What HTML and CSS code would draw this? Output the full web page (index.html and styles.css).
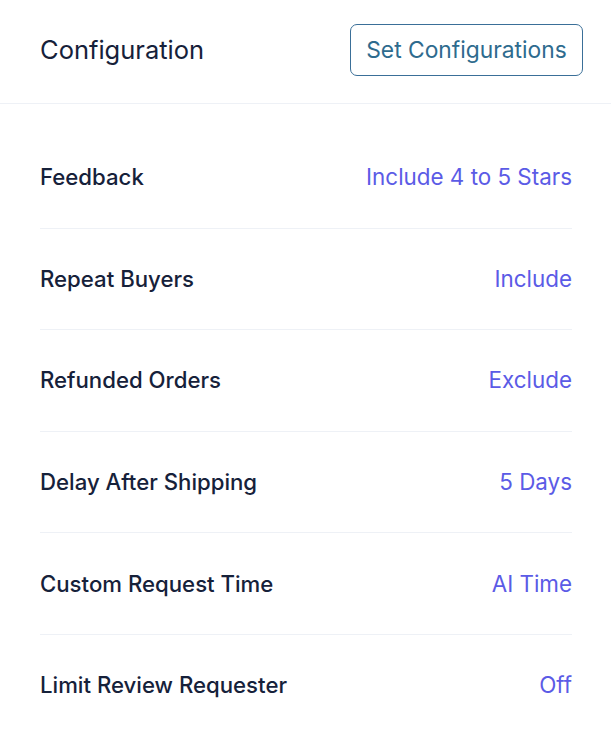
FILE: index.html
```html
<!DOCTYPE html>
<html>
<head>
<meta charset="utf-8">
<link rel="stylesheet" href="styles.css">
</head>
<body>
<div class="card">
  <header class="header">
    <h1 class="title">Configuration</h1>
    <button class="btn">Set Configurations</button>
  </header>
  <ul class="list">
    <li class="row"><span class="label">Feedback</span><span class="value">Include 4 to 5 Stars</span></li>
    <li class="row"><span class="label">Repeat Buyers</span><span class="value">Include</span></li>
    <li class="row"><span class="label">Refunded Orders</span><span class="value">Exclude</span></li>
    <li class="row"><span class="label">Delay After Shipping</span><span class="value">5 Days</span></li>
    <li class="row"><span class="label">Custom Request Time</span><span class="value">AI Time</span></li>
    <li class="row"><span class="label">Limit Review Requester</span><span class="value">Off</span></li>
  </ul>
</div>
</body>
</html>
```
FILE: styles.css
```css
html, body {
  margin: 0;
  padding: 0;
  background: #ffffff;
}
body {
  font-family: "Inter", "Liberation Sans", sans-serif;
  width: 611px;
}
.card {
  background: #fff;
}
.header {
  display: flex;
  align-items: center;
  justify-content: space-between;
  height: 104px;
  padding: 0 28px 4px 40px;
  box-sizing: border-box;
  border-bottom: 1px solid #eef1f6;
}
.title {
  margin: 0;
  font-size: 25.5px;
  font-weight: 400;
  color: #16213a;
  line-height: 30px;
}
.btn {
  font-family: inherit;
  font-size: 22.8px;
  font-weight: 400;
  color: #2e6b8e;
  background: #fff;
  border: 1.5px solid #3a6f98;
  border-radius: 7px;
  height: 52px;
  width: 233px;
  padding: 0;
  white-space: nowrap;
}
.list {
  list-style: none;
  margin: 0;
  padding: 23px 39px 0 40px;
}
.row {
  display: flex;
  justify-content: space-between;
  align-items: center;
  line-height: 24px;
  padding: 38.3px 0;
  border-bottom: 1px solid #eef1f6;
}
.row:last-child {
  border-bottom: none;
}
.label {
  font-size: 22.2px;
  font-weight: 500;
  color: #16213a;
}
.value {
  font-size: 22.4px;
  font-weight: 400;
  color: #5b5be6;
}
```
